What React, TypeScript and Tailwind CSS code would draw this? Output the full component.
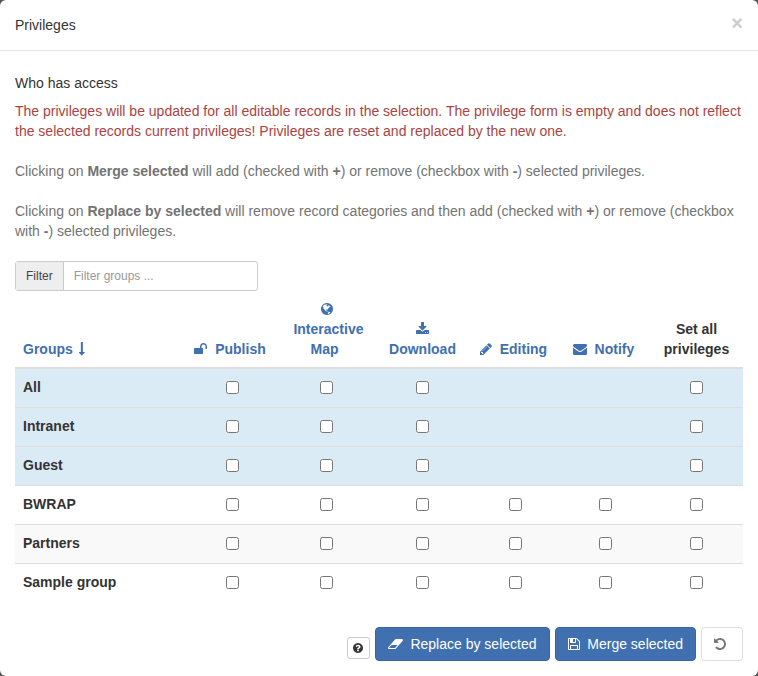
import { useState } from "react";

type IconProps = { path: string; box?: string; className?: string };

function Icon({ path, box = "128 0 1536 1792", className = "w-3 h-3.5" }: IconProps) {
  return (
    <svg viewBox={box} className={`inline-block fill-current align-[-2px] ${className}`} aria-hidden="true">
      <path d={path} />
    </svg>
  );
}

const icons = {
  arrow: "M1157 1299q11 25-8 47l-350 384q-10 10-23 10-14 0-24-10l-355-384q-18-21-8-47 12-25 38-25h224v-1248q0-14 9-23t23-9h192q14 0 23 9t9 23v1248h224q28 0 26 25z",
  unlock: "M1728 576v256q0 26-19 45t-45 19h-64q-26 0-45-19t-19-45v-256q0-106-75-181t-181-75-181 75-75 181v192h96q40 0 68 28t28 68v576q0 40-28 68t-68 28h-960q-40 0-68-28t-28-68v-576q0-40 28-68t68-28h672v-192q0-185 131.500-316.500t316.500-131.500 316.500 131.500 131.500 316.500z",
  globe: "M896 128q209 0 385.500 103t279.500 279.500 103 385.500-103 385.500-279.500 279.500-385.500 103-385.500-103-279.500-279.500-103-385.500 103-385.500 279.500-279.500 385.500-103zm274 521q-2 1-9.500 9.500t-13.500 9.500q2 0 4.500-5t5-11 3.500-7q6-7 22-15 14-6 52-12 34-8 51 11-2-2 9.500-13t14.500-12q3-2 15-4.500t15-7.500l2-22q-12 1-17.500-7t-6.500-21q0 2-6 8 0-7-4.500-8t-11.500 1-9 1q-10-3-15-7.500t-8-16.500-4-15q-2-5-9.500-11t-9.500-10q-1-2-2.500-5.500t-3-6.500-4-5.500-5.500-2.500-7 5-7.500 10-4.500 5q-3-2-6-1.500t-4.500 1-4.500 3-5 3.500q-3 2-8.500 3t-8.500 2q15-5-1-11-10-4-16-3 9-4 7.500-12t-8.500-14h5q-1-4-8.500-8.500t-17.500-8.500-13-6q-8-5-34-9.500t-33-.5q-5 6-4.500 10.500t4 14 3.500 12.500q1 6-5.500 13t-6.500 12q0 7 14 15.500t10 21.500q-3 8-16 16t-16 12q-5 8-1.500 18.500t10.500 16.500q2 2 1.500 4t-3.500 4.500-5.500 4-6.500 3.500l-3 2q-11 5-20.500-6t-13.500-26q-7-25-16-30-23-8-29 1-5-13-41-26-25-9-58-4 6-1 0-15-7-15-19-12 3-6 4-17.500t1-13.500q3-13 12-23 1-1 7-8.500t9.500-13.500.5-6q35 4 50-11 5-5 11.500-17t10.500-17q9-6 14-5.500t14.500 5.500 14.500 5q14 1 15.500-11t-7.500-20q12 1 3-17-4-7-8-9-12-4-27 5-8 4 2 8-1-1-9.500 10.500t-16.500 17.500-16-5q-1-1-5.500-13.500t-9.500-13.500q-8 0-16 15 3-8-11-15t-24-8q19-12-8-27-7-4-20.500-5t-19.500 4q-5 7-5.500 11.500t5 8 10.500 5.500 11.500 4 8.500 3q14 10 8 14-2 1-8.500 3.500t-11.500 4.500-6 4q-3 4 0 14t-2 14q-5-5-9-17.500t-7-16.500q7 9-25 6l-10-1q-4 0-16 2t-20.500 1-13.500-8q-4-8 0-20 1-4 4-2-4-3-11-9.500t-10-8.500q-46 15-94 41 6 1 12-1 5-2 13-6.500t10-5.500q34-14 42-7l5-5q14 16 20 25-7-4-30-1-20 6-22 12 7 12 5 18-4-3-11.500-10t-14.500-11-15-5q-16 0-22 1-146 80-235 222 7 7 12 8 4 1 5 9t2.500 11 11.500-3q9 8 3 19 1-1 44 27 19 17 21 21 3 11-10 18-1-2-9-9t-9-4q-3 5 .5 18.500t10.500 12.500q-7 0-9.500 16t-2.500 35.500-1 23.500l2 1q-3 12 5.500 34.500t21.500 19.500q-13 3 20 43 6 8 8 9 3 2 12 7.500t15 10 10 10.500q4 5 10 22.500t14 23.500q-2 6 9.500 20t10.500 23q-1 0-2.500 1t-2.500 1q3 7 15.500 14t15.500 13q1 3 2 10t3 11 8 2q2-20-24-62-15-25-17-29-3-5-5.500-15.500t-4.500-14.500q2 0 6 1.500t8.500 3.500 7.500 4 2 3q-3 7 2 17.500t12 18.500 17 19 12 13q6 6 14 19.500t0 13.500q9 0 20 10.500t17 19.500q5 8 8 26t5 24q2 7 8.500 13.500t12.500 9.500l16 8 13 7q5 2 18.500 10.500t21.500 11.500q10 4 16 4t14.500-2.500 13.500-3.500q15-2 29 15t21 21q36 19 55 11-2 1 .5 7.500t8 15.500 9 14.500 5.500 8.500q5 6 18 15t18 15q6-4 7-9-3 8 7 20t18 10q14-3 14-32-31 15-49-18 0-1-2.500-5.500t-4-8.500-2.500-8.500 0-7.500 5-3q9 0 10-3.500t-2-12.500-4-13q-1-8-11-20t-12-15q-5 9-16 8t-16-9q0 1-1.500 5.500t-1.500 6.500q-13 0-15-1 1-3 2.500-17.500t3.500-22.500q1-4 5.500-12t7.500-14.500 4-12.500-4.500-9.500-17.500-2.500q-19 1-26 20-1 3-3 10.500t-5 11.500-9 7q-7 3-24 2t-24-5q-13-8-22.500-29t-9.500-37q0-10 2.500-26.500t3-25-5.500-24.500q3-2 9-9.500t10-10.500q2-1 4.500-1.500t4.500 0 4-1.500 3-6q-1-1-4-3-3-3-4-3 7 3 28.500-1.500t27.500 1.500q15 11 22-2 0-1-2.500-9.500t-.5-13.500q5 27 29 9 3 3 15.500 5t17.500 5q3 2 7 5.500t5.500 4.500 5-.5 8.500-6.500q10 14 12 24 11 40 19 44 7 3 11 2t4.500-9.500 0-14-1.500-12.500l-1-8v-18l-1-8q-15-3-18.500-12t1.500-18.500 15-18.500q1-1 8-3.500t15.500-6.500 12.500-8q21-19 15-35 7 0 11-9-1 0-5-3t-7.500-5-4.500-2q9-5 2-16 5-3 7.500-11t7.500-10q9 12 21 2 7-8 1-16 5-7 20.500-10.500t18.500-9.500q7 2 8-2t1-12 3-12q4-5 15-9t13-5l17-11q3-4 0-4 18 2 31-11 10-11-6-20 3-6-3-9.500t-15-5.500q3-1 11.500-.5t10.500-1.500q15-10-7-16-17-5-43 12zm-163 877q206-36 351-189-3-3-12.500-4.500t-12.500-3.500q-18-7-24-8 1-7-2.500-13t-8-9-12.500-8-11-7q-2-2-7-6t-7-5.500-7.500-4.500-8.500-2-10 1l-3 1q-3 1-5.500 2.500t-5.500 3-4 3 0 2.500q-21-17-36-22-5-1-11-5.500t-10.500-7-10-1.500-11.500 7q-5 5-6 15t-2 13q-7-5 0-17.500t2-18.500q-3-6-10.500-4.500t-12 4.500-11.500 8.500-9 6.500-8.500 5.500-8.500 7.500q-3 4-6 12t-5 11q-2-4-11.500-6.500t-9.500-5.500q2 10 4 35t5 38q7 31-12 48-27 25-29 40-4 22 12 26 0 7-8 20.500t-7 21.500q0 6 2 16z",
  download: "M1344 1344q0-26-19-45t-45-19-45 19-19 45 19 45 45 19 45-19 19-45zm256 0q0-26-19-45t-45-19-45 19-19 45 19 45 45 19 45-19 19-45zm128-224v320q0 40-28 68t-68 28h-1472q-40 0-68-28t-28-68v-320q0-40 28-68t68-28h465l135 136q58 56 136 56t136-56l136-136h464q40 0 68 28t28 68zm-325-569q17 41-14 70l-448 448q-18 19-45 19t-45-19l-448-448q-31-29-14-70 17-39 59-39h256v-448q0-26 19-45t45-19h256q26 0 45 19t19 45v448h256q42 0 59 39z",
  pencil: "M491 1536l91-91-235-235-91 91v107h128v128h107zm523-928q0-22-22-22-10 0-17 7l-542 542q-7 7-7 17 0 22 22 22 10 0 17-7l542-542q7-7 7-17zm-54-192l416 416-832 832h-416v-416zm683 96q0 53-37 90l-166 166-416-416 166-165q36-38 90-38 53 0 91 38l235 234q37 39 37 91z",
  envelope: "M1792 710v794q0 66-47 113t-113 47h-1472q-66 0-113-47t-47-113v-794q44 49 101 87 362 246 497 345 57 42 92.500 65.500t94.500 48 110 24.500h2q51 0 110-24.500t94.500-48 92.500-65.500q170-123 498-345 57-39 100-87zm0-294q0 79-49 151t-122 123q-376 261-468 325-10 7-42.500 31t-54 38.500-52 32.500-57.500 27-50 9h-2q-23 0-50-9t-57.500-27-52-32.500-54-38.500-42.500-31q-91-64-262-182.500t-205-142.500q-62-42-117-115.500t-55-136.500q0-78 41.500-130t118.500-52h1472q65 0 112.500 47t47.500 113z",
  eraser: "M896 1408l336-384h-768l-336 384h768zm1013-1077q15 34 9.500 71.500t-30.500 65.500l-896 1024q-38 44-96 44h-768q-38 0-69.500-20.500t-47.500-54.500q-15-34-9.500-71.500t30.500-65.500l896-1024q38-44 96-44h768q38 0 69.500 20.500t47.500 54.500z",
  save: "M512 1536h768v-384h-768v384zm896 0h128v-896q0-14-10-38.500t-20-34.500l-281-281q-10-10-34-20t-39-10v416q0 40-28 68t-68 28h-576q-40 0-68-28t-28-68v-416h-128v1280h128v-416q0-40 28-68t68-28h832q40 0 68 28t28 68v416zm-384-928v-320q0-13-9.500-22.500t-22.500-9.500h-192q-13 0-22.500 9.500t-9.500 22.500v320q0 13 9.500 22.500t22.500 9.500h192q13 0 22.500-9.500t9.500-22.500zm640 32v928q0 40-28 68t-68 28h-1344q-40 0-68-28t-28-68v-1344q0-40 28-68t68-28h928q40 0 88 20t76 48l280 280q28 28 48 76t20 88z",
  question: "M1024 1376v-192q0-14-9-23t-23-9h-192q-14 0-23 9t-9 23v192q0 14 9 23t23 9h192q14 0 23-9t9-23zm256-672q0-88-55.500-163t-138.500-116-170-41q-243 0-371 213-15 24 8 42l132 100q7 6 19 6 16 0 25-12 53-68 86-92 34-24 86-24 48 0 85.500 26t37.500 59q0 38-20 61t-68 45q-63 28-115.500 86.500t-52.500 125.500v36q0 14 9 23t23 9h192q14 0 23-9t9-23q0-19 21.500-49.500t54.500-49.500q32-18 49-28.500t46-35 44.500-48 28-60.500 12.500-81zm384 192q0 209-103 385.500t-279.500 279.500-385.500 103-385.500-103-279.500-279.500-103-385.500 103-385.500 279.500-279.500 385.500-103 385.500 103 279.500 279.500 103 385.500z",
  undo: "M1664 896q0 156-61 298t-164 245-245 164-298 61q-172 0-327-72.500t-264-204.500q-7-10-6.500-22.500t8.500-20.500l137-138q10-9 25-9 16 2 23 12 73 95 179 147t225 52q104 0 198.500-40.500t163.500-109.500 109.500-163.500 40.500-198.500-40.500-198.500-109.500-163.500-163.500-109.500-198.500-40.500q-98 0-188 35.500t-160 101.500l137 138q31 30 14 69-17 40-59 40h-448q-26 0-45-19t-19-45v-448q0-42 40-59 39-17 69 14l130 129q107-101 244.500-156.500t284.500-55.500q156 0 298 61t245 164 164 245 61 298z",
};

const columns = [
  { label: "Publish", icon: icons.unlock, box: "64 0 1664 1792", size: "w-[13px] h-3.5", width: "w-[92px]" },
  { label: "Interactive Map", icon: icons.globe, box: "128 0 1536 1792", size: "w-3 h-3.5", width: "w-[97px]" },
  { label: "Download", icon: icons.download, box: "64 0 1664 1792", size: "w-[13px] h-3.5", width: "w-[95px]" },
  { label: "Editing", icon: icons.pencil, box: "128 0 1536 1792", size: "w-3 h-3.5", width: "w-[91px]" },
  { label: "Notify", icon: icons.envelope, box: "0 0 1792 1792", size: "w-3.5 h-3.5", width: "w-[89px]" },
];

const groups = [
  { name: "All", reserved: true, row: "bg-[#dbebf6]" },
  { name: "Intranet", reserved: true, row: "bg-[#dbebf6]" },
  { name: "Guest", reserved: true, row: "bg-[#dbebf6]" },
  { name: "BWRAP", reserved: false, row: "bg-white" },
  { name: "Partners", reserved: false, row: "bg-[#f9f9f9]" },
  { name: "Sample group", reserved: false, row: "bg-white" },
];

const checkbox = "block mx-auto w-[13px] h-[13px]";

export default function App() {
  const [filter, setFilter] = useState("");
  const [checked, setChecked] = useState<Record<string, boolean>>({});

  const toggle = (key: string) => setChecked({ ...checked, [key]: !checked[key] });

  const toggleAll = (name: string, reserved: boolean) => {
    const next = { ...checked };
    const value = !checked[`${name}-all`];
    columns.slice(0, reserved ? 3 : 5).forEach((c) => (next[`${name}-${c.label}`] = value));
    next[`${name}-all`] = value;
    setChecked(next);
  };

  const visible = groups.filter((g) => g.name.toLowerCase().includes(filter.toLowerCase()));

  return (
    <div className="min-h-screen bg-[#555] font-['Liberation_Sans',Arial,sans-serif] text-sm leading-5 text-[#333]">
      <div className="min-h-screen rounded-md bg-white">
        <header className="flex items-start justify-between border-b border-[#e5e5e5] p-[15px]">
          <h4>Privileges</h4>
          <button type="button" aria-label="Close" className="text-xl font-bold leading-4 text-[#ccc]">
            ×
          </button>
        </header>

        <main className="px-[15px] pt-[22px]">
          <h5 className="mb-2">Who has access</h5>
          <p className="mb-5 text-[#a94442]">
            The privileges will be updated for all editable records in the selection. The privilege form is empty and
            does not reflect the selected records current privileges! Privileges are reset and replaced by the new one.
          </p>
          <p className="mb-5 text-[#737373]">
            Clicking on <b>Merge selected</b> will add (checked with <b>+</b>) or remove (checkbox with <b>-</b>)
            selected privileges.
          </p>
          <p className="mb-5 text-[#737373]">
            Clicking on <b>Replace by selected</b> will remove record categories and then add (checked with{" "}
            <b>+</b>) or remove (checkbox with <b>-</b>) selected privileges.
          </p>

          <div className="flex w-1/3 h-[30px] rounded-[3px] border border-[#ccc] text-xs">
            <label htmlFor="filter" className="flex items-center border-r border-[#ccc] bg-[#eee] px-2.5 text-[#444]">
              Filter
            </label>
            <input
              id="filter"
              className="min-w-0 flex-1 px-2.5 placeholder:text-[#999]"
              placeholder="Filter groups ..."
              value={filter}
              onChange={(e) => setFilter(e.target.value)}
            />
          </div>

          <table className="w-full table-fixed border-collapse">
            <thead>
              <tr className="border-b-2 border-[#ddd] align-bottom text-[#4070b0]">
                <th className="p-2 text-left">
                  <button type="button" className="font-bold">
                    Groups <Icon path={icons.arrow} box="414 0 896 1792" className="ml-0.5 w-[7px] h-3.5" />
                  </button>
                </th>
                {columns.map((c) => (
                  <th key={c.label} className={`p-2 ${c.width}`}>
                    <button type="button" className="font-bold">
                      <Icon path={c.icon} box={c.box} className={c.size} /> &nbsp;{c.label}&nbsp;
                    </button>
                  </th>
                ))}
                <th className="w-[93px] p-2 text-[#333]">Set all privileges</th>
              </tr>
            </thead>
            <tbody>
              {visible.map((g) => (
                <tr key={g.name} className={`h-[39px] border-t border-[#ddd] first:border-t-0 ${g.row}`}>
                  <th scope="row" className="px-2 pt-2 text-left align-top">
                    {g.name}
                  </th>
                  {columns.map((c, i) => (
                    <td key={c.label}>
                      {(i < 3 || !g.reserved) && (
                        <input
                          type="checkbox"
                          aria-label={`${g.name} ${c.label}`}
                          className={checkbox}
                          checked={!!checked[`${g.name}-${c.label}`]}
                          onChange={() => toggle(`${g.name}-${c.label}`)}
                        />
                      )}
                    </td>
                  ))}
                  <td>
                    <input
                      type="checkbox"
                      aria-label={`${g.name} all privileges`}
                      className={checkbox}
                      checked={!!checked[`${g.name}-all`]}
                      onChange={() => toggleAll(g.name, g.reserved)}
                    />
                  </td>
                </tr>
              ))}
            </tbody>
          </table>

          <div className="mt-[25px] flex items-end justify-end gap-[5px] pb-[15px]">
            <button
              type="button"
              aria-label="Help"
              className="mb-0.5 flex h-[22px] w-[23px] items-center justify-center rounded-[3px] border border-[#ccc]"
            >
              <Icon path={icons.question} box="128 128 1536 1536" className="w-2.5 h-2.5" />
            </button>
            <button type="button" className="h-[34px] rounded border border-[#3a659e] bg-[#4070b0] px-3 text-white">
              <Icon path={icons.eraser} box="0 0 1920 1792" className="w-[15px] h-3.5" /> &nbsp;Replace by selected
            </button>
            <button type="button" className="h-[34px] rounded border border-[#3a659e] bg-[#4070b0] px-3 text-white">
              <Icon path={icons.save} /> &nbsp;Merge selected
            </button>
            <button
              type="button"
              aria-label="Reset"
              className="h-[34px] w-[42px] rounded border border-[#ddd] px-3 text-left text-[#777]"
            >
              <Icon path={icons.undo} />
            </button>
          </div>
        </main>
      </div>
    </div>
  );
}
